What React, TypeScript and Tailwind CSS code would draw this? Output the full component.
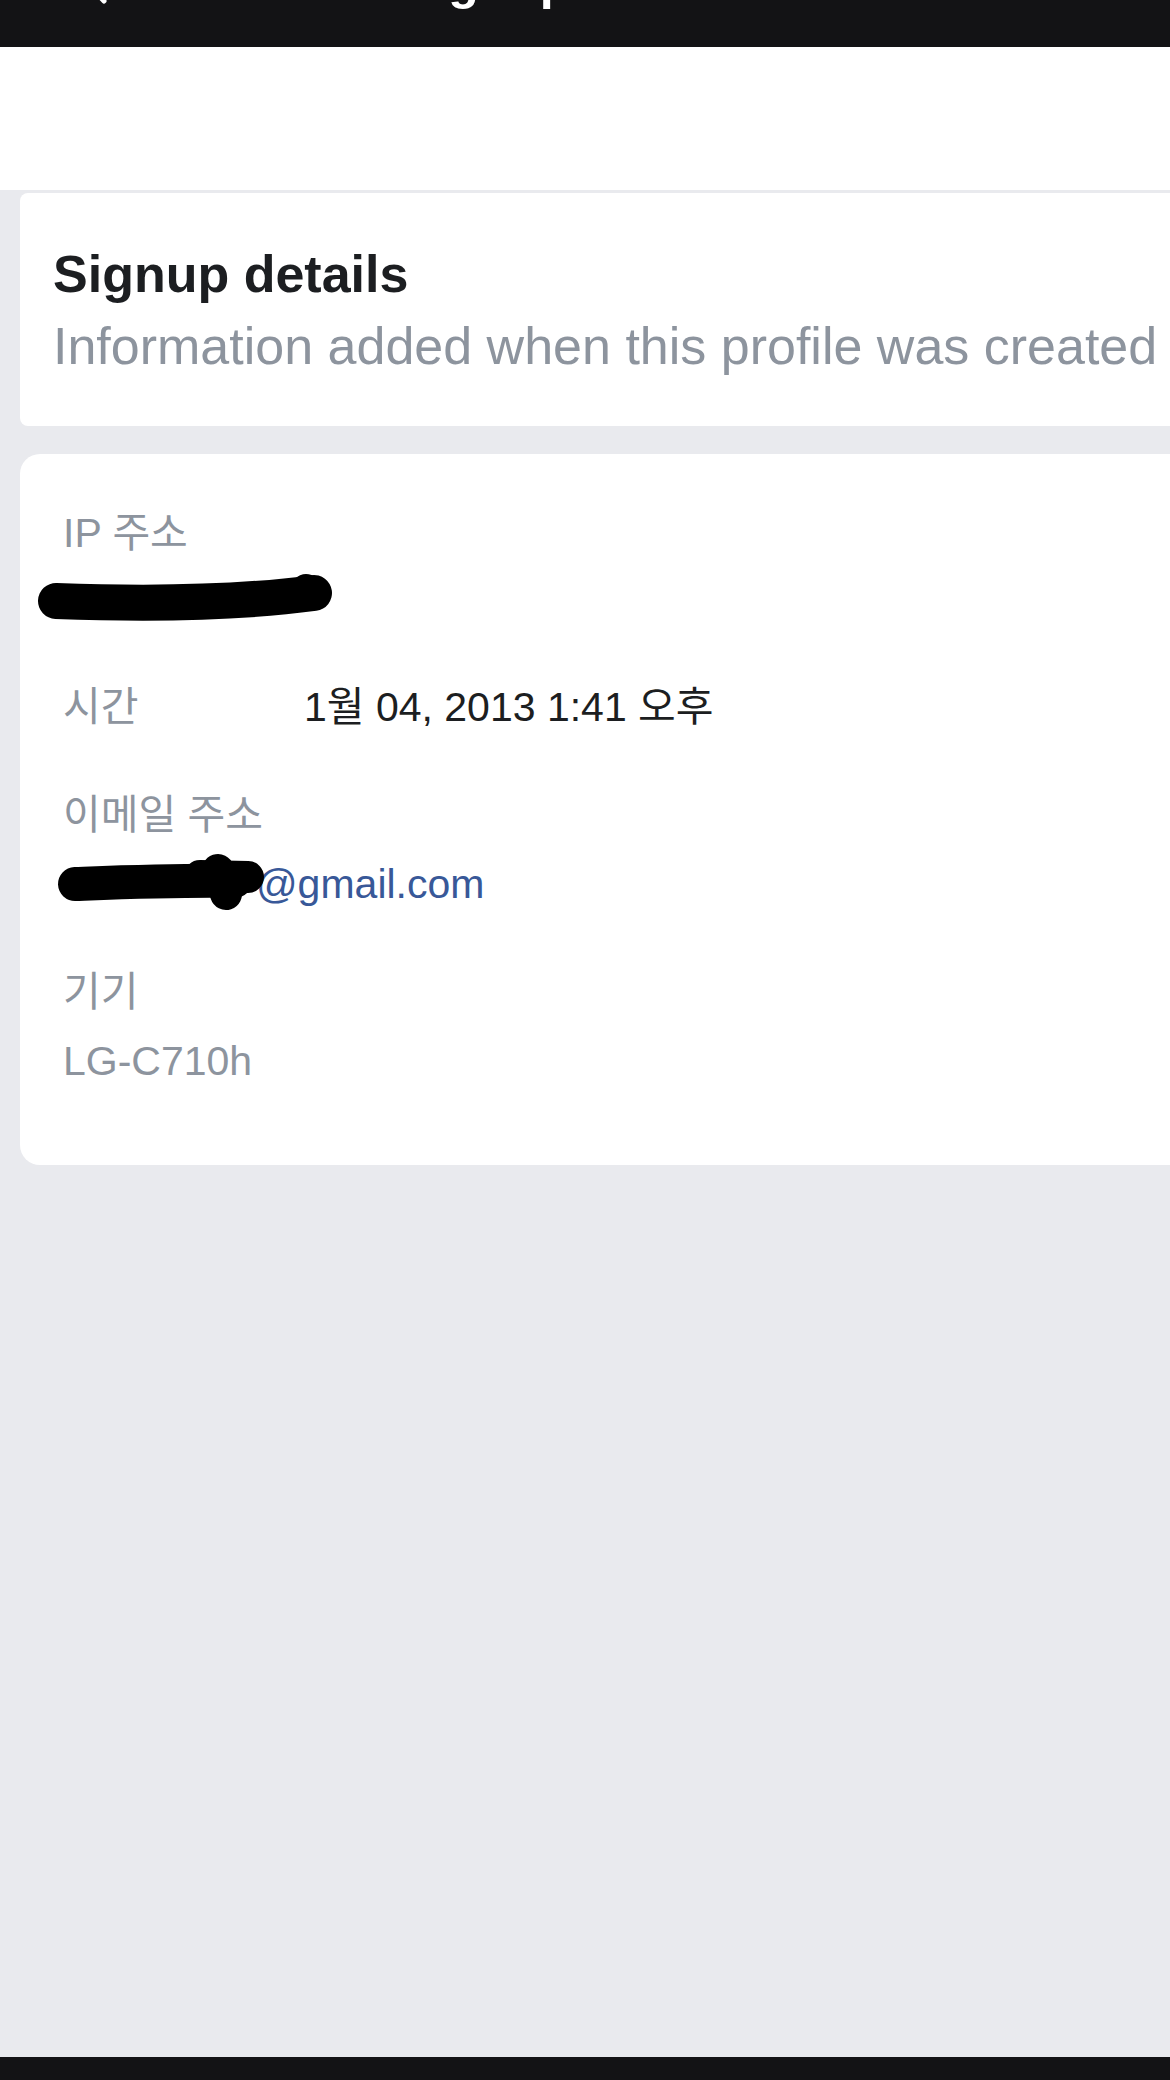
import React from "react";

const font = "font-[Liberation_Sans,Noto_Sans_CJK_KR,sans-serif]";

export default function App() {
  return (
    <div className={`${font} min-h-[2080px] flex flex-col bg-[#e9eaee] overflow-hidden`}>
      {/* scrolled-off dark header */}
      <div className="relative h-[47px] bg-[#131315] overflow-hidden shrink-0">
        <svg className="absolute left-0 top-0" width="140" height="47" viewBox="0 0 140 47">
          <path d="M118 -52 L 84 -20 L 104 1" stroke="#fff" strokeWidth="5" strokeLinecap="round" strokeLinejoin="round" fill="none" />
        </svg>
        <div className="-mt-[48px] h-[60px] pl-[401px] flex items-end text-white text-[50px] leading-[60px] font-bold whitespace-nowrap">
          <span>Signup 보</span>
        </div>
      </div>
      {/* white band */}
      <div className="h-[143px] bg-white shrink-0" />
      {/* content */}
      <div className="pt-[3px] pl-[20px] flex flex-col gap-[28px] -mr-[40px]">
        <div className="bg-white rounded-[8px] pt-[51px] pb-[50px] pl-[33px]">
          <div className="text-[52px] leading-[60px] font-bold text-[#1c1e21] whitespace-nowrap">
            Signup details
          </div>
          <div className="mt-[12px] text-[52px] leading-[60px] text-[#8d949e] whitespace-nowrap">
            Information added when this profile was created
          </div>
        </div>

        <div className="relative bg-white rounded-[20px] pt-[54px] pb-[79px] pl-[43px] text-[41px] leading-[50px]">
          <div className="text-[#8d949e]">IP 주소</div>
          <div className="mt-[16px] h-[50px]" />

          <div className="mt-[58px] flex">
            <div className="w-[241px] text-[#8d949e]">시간</div>
            <div className="text-[#1c1e21]">1월 04, 2013 1:41 오후</div>
          </div>

          <div className="mt-[58px] text-[#8d949e]">이메일 주소</div>
          <div className="mt-[19px] flex text-[#385898]">
            <span className="w-[193px]" />
            <span>@gmail.com</span>
          </div>

          <div className="mt-[58px] text-[#8d949e]">기기</div>
          <div className="mt-[19px] text-[#8d949e]">LG-C710h</div>

          {/* redaction marks */}
          <svg className="absolute left-0 top-0" width="360" height="480" viewBox="0 0 360 480">
            <path d="M36 147 C 120 150, 220 149, 294 139" stroke="#000" strokeWidth="36" strokeLinecap="round" fill="none" />
            <path d="M286 135 L 296 139" stroke="#000" strokeWidth="30" strokeLinecap="round" fill="none" />
            <path d="M55 430 C 110 428, 160 426, 215 427" stroke="#000" strokeWidth="34" strokeLinecap="round" fill="none" />
            <path d="M180 422 L 228 423" stroke="#000" strokeWidth="32" strokeLinecap="round" fill="none" />
            <path d="M198 416 L 206 440" stroke="#000" strokeWidth="32" strokeLinecap="round" fill="none" />
          </svg>
        </div>
      </div>
      <div className="flex-1" />
      <div className="h-[23px] bg-[#131315] shrink-0" />
    </div>
  );
}
